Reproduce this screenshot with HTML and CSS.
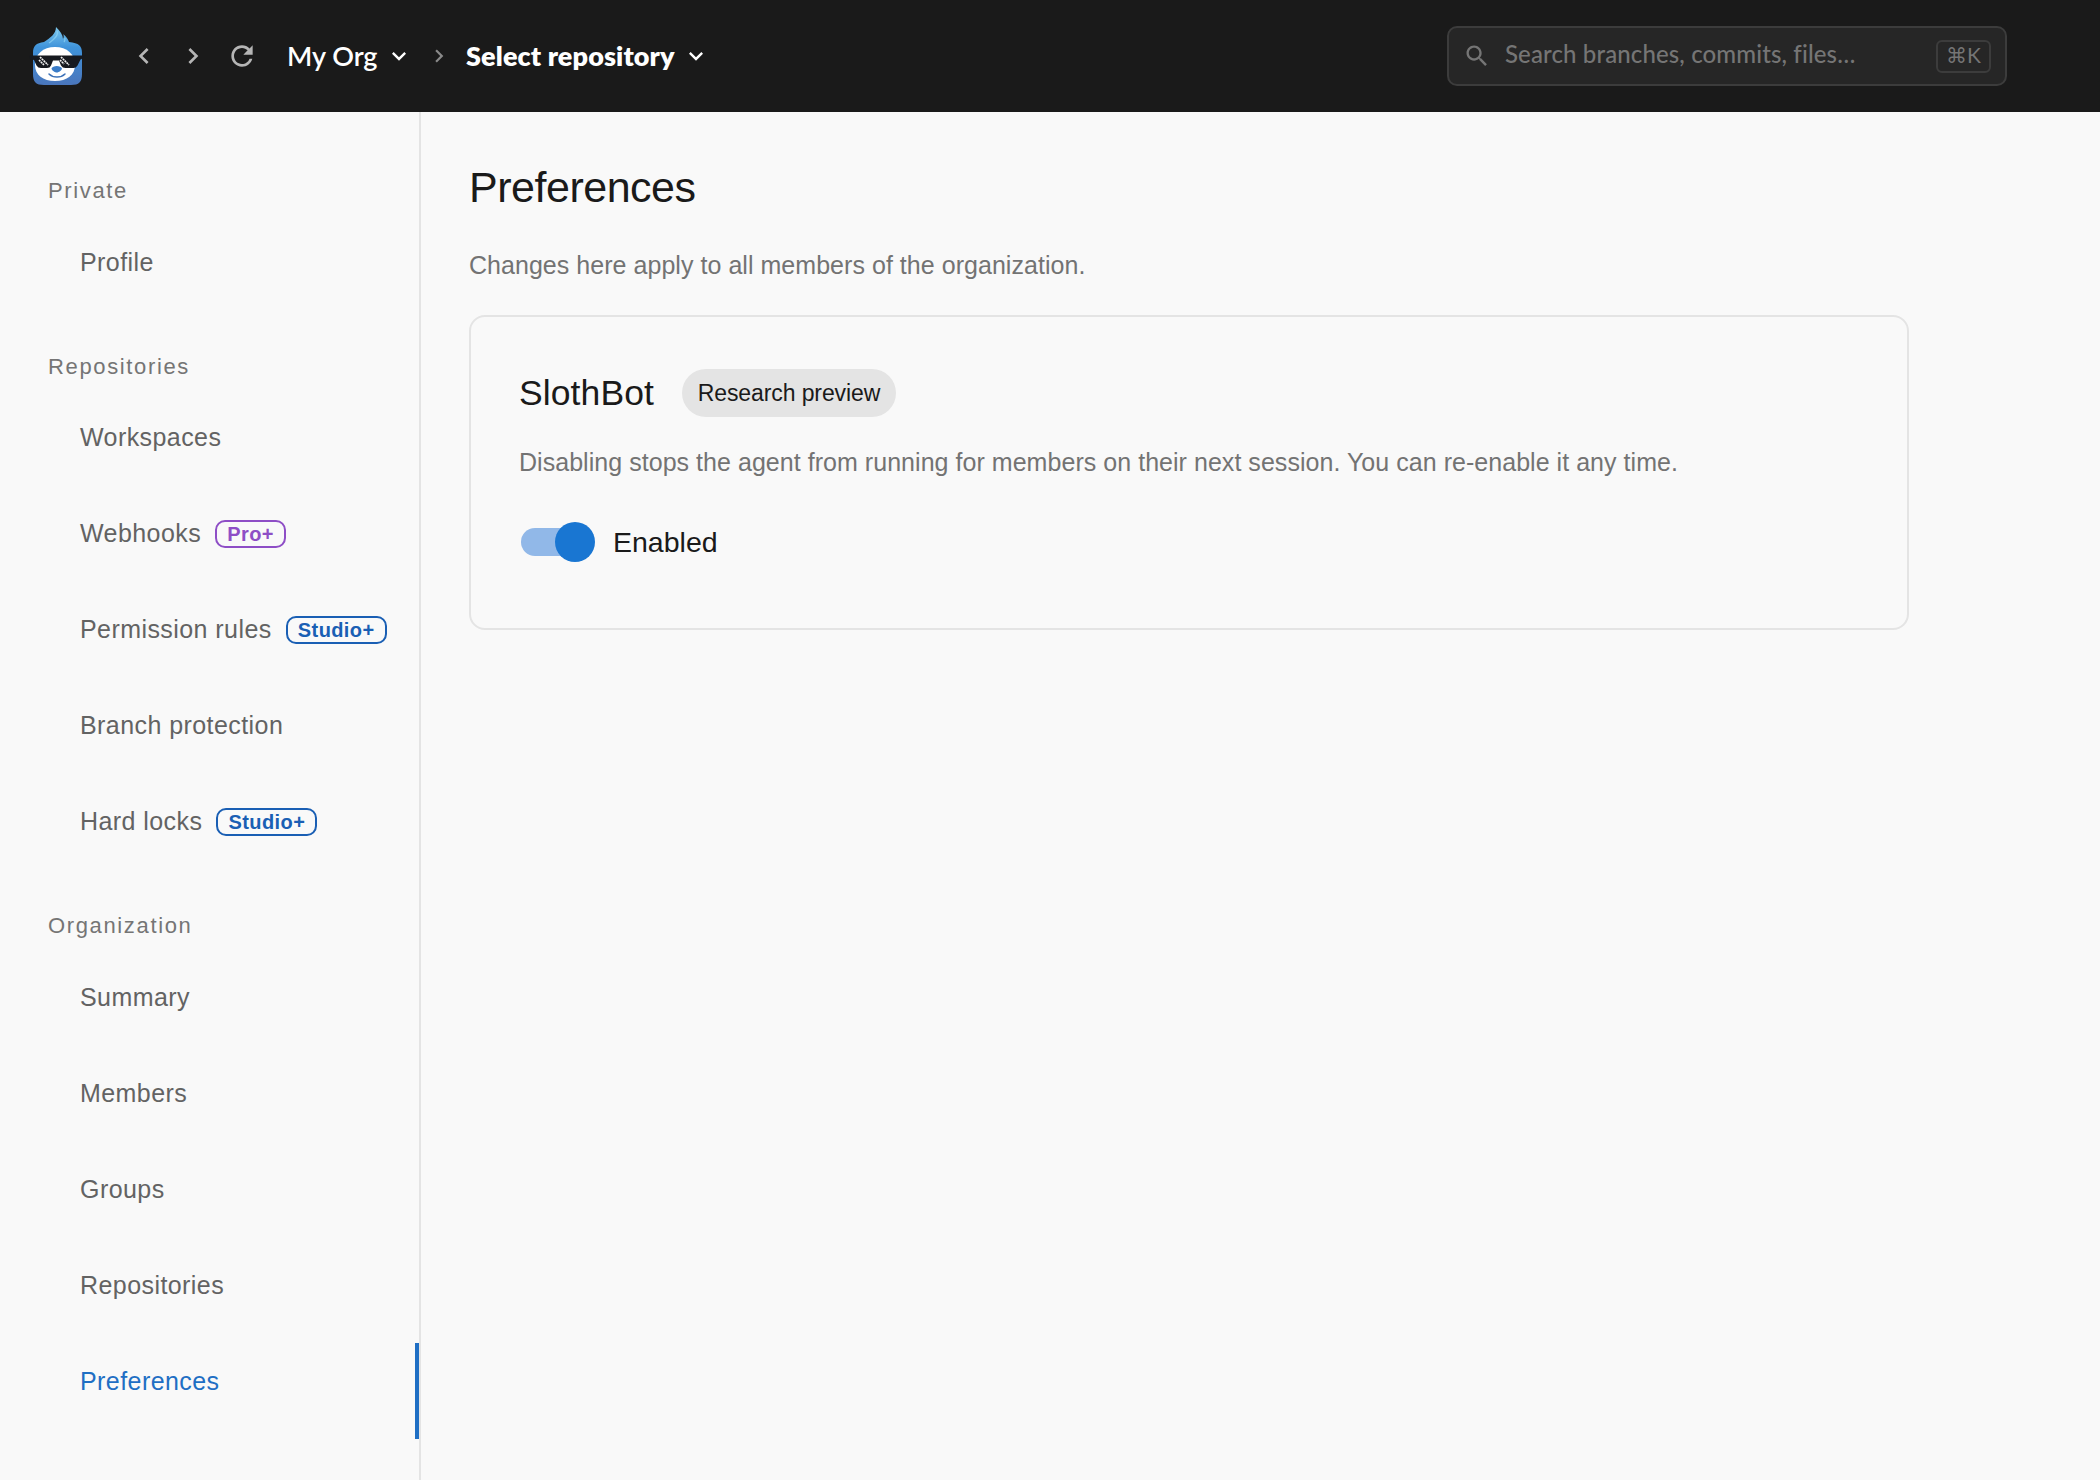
FILE: index.html
```html
<!DOCTYPE html>
<html lang="en">
<head>
<meta charset="utf-8">
<title>Preferences</title>
<link rel="stylesheet" href="styles.css">
</head>
<body>
<header class="topbar">
  <svg class="logo" viewBox="0 0 60 62" aria-label="Home">
    <defs>
      <linearGradient id="fur" x1="0" y1="0" x2="0" y2="1">
        <stop offset="0" stop-color="#7cc8ee"/>
        <stop offset=".35" stop-color="#3f93da"/>
        <stop offset="1" stop-color="#4a76bc"/>
      </linearGradient>
    </defs>
    <path fill="url(#fur)" d="M5 28c0-7 3-10 11-11 6-4 12-8 12-15 4 4 7 8 7 12 1-2 1-4 0-5 3 2 5 5 6 8 10 1 13 4 13 11v21c0 8-3 11-11 11H16C8 60 5 57 5 49z"/>
    <path fill="none" stroke="#9adcf6" stroke-width="1.200" opacity=".6" d="M29 6c2 5-4 9-8 12M37 13c0 2 0 3-1 4"/>
    <path fill="#fff" d="M7 40c0-11 8-18 20-18s20 7 20 18c0 10-8 16-20 16S7 50 7 40z"/>
    <path fill="#16191f" d="M1.500 30.500h56l-3 3-2 1-3 6q-1.500 2.500-4 2.500h-8q-3 0-4.500-2.500L31 35.500h-6l-2 5Q22 43 19 43h-6q-3 0-4.500-2.500L6 35l-4-1z"/>
    <path fill="none" stroke="#f0f0f0" stroke-width="1.600" stroke-dasharray="2 .6" d="M12 32l8 8M11 35l5 5M33 32l8 8M32 35l4 4"/>
    <path fill="#3a7cc8" d="M23.500 43.500c1-3.500 9.500-3.500 10.500 0 0 1.500-3 4-5.250 4s-5.250-2.500-5.250-4z"/>
    <path fill="none" stroke="#3d72b8" stroke-width="1.500" stroke-linecap="round" d="M21 49c4 4 12 4 16 0"/>
  </svg>
  <nav class="history">
    <svg class="icon-32" viewBox="0 0 24 24"><path d="M15.410 7.410 14 6l-6 6 6 6 1.410-1.410L10.830 12z"/></svg>
    <svg class="icon-32" viewBox="0 0 24 24"><path d="M10 6 8.590 7.410 13.170 12l-4.580 4.590L10 18l6-6z"/></svg>
    <svg class="icon-32" viewBox="0 0 24 24"><path d="M17.650 6.350C16.200 4.900 14.210 4 12 4c-4.420 0-7.990 3.580-7.990 8s3.570 8 7.990 8c3.730 0 6.840-2.550 7.730-6h-2.080c-.82 2.330-3.040 4-5.650 4-3.310 0-6-2.690-6-6s2.690-6 6-6c1.660 0 3.140.69 4.220 1.780L13 11h7V4z"/></svg>
  </nav>
  <nav class="crumbs">
    <span class="crumb org">My Org</span>
    <svg class="icon-28" viewBox="0 0 24 24"><path d="M7.410 8.590 12 13.170l4.590-4.580L18 10l-6 6-6-6z"/></svg>
    <svg class="divider" viewBox="0 0 24 24"><path d="M10 6 8.590 7.410 13.170 12l-4.580 4.590L10 18l6-6z"/></svg>
    <span class="crumb repo">Select repository</span>
    <svg class="icon-28" viewBox="0 0 24 24"><path d="M7.410 8.590 12 13.170l4.590-4.580L18 10l-6 6-6-6z"/></svg>
  </nav>
  <div class="search">
    <svg class="icon-28" viewBox="0 0 24 24"><path d="M15.500 14h-.79l-.28-.27C15.410 12.590 16 11.110 16 9.500 16 5.910 13.090 3 9.500 3S3 5.910 3 9.500 5.910 16 9.500 16c1.610 0 3.090-.59 4.230-1.570l.27.28v.79l5 4.990L20.490 19zm-6 0C7.010 14 5 11.990 5 9.500S7.010 5 9.500 5 14 7.010 14 9.500 11.990 14 9.500 14"/></svg>
    <span class="search-text">Search branches, commits, files…</span>
    <kbd class="shortcut">⌘K</kbd>
  </div>
</header>
<div class="body">
  <aside class="sidebar">
    <h2 class="group">Private</h2>
    <a class="item">Profile</a>
    <h2 class="group">Repositories</h2>
    <a class="item">Workspaces</a>
    <a class="item">Webhooks<span class="badge pro">Pro+</span></a>
    <a class="item">Permission rules<span class="badge studio">Studio+</span></a>
    <a class="item">Branch protection</a>
    <a class="item">Hard locks<span class="badge studio">Studio+</span></a>
    <h2 class="group">Organization</h2>
    <a class="item">Summary</a>
    <a class="item">Members</a>
    <a class="item">Groups</a>
    <a class="item">Repositories</a>
    <a class="item active">Preferences</a>
  </aside>
  <main class="content">
    <h1 class="title">Preferences</h1>
    <p class="subtitle">Changes here apply to all members of the organization.</p>
    <section class="card">
      <div class="card-head">
        <h2 class="card-title">SlothBot</h2>
        <span class="chip">Research preview</span>
      </div>
      <p class="card-text">Disabling stops the agent from running for members on their next session. You can re-enable it any time.</p>
      <div class="toggle-row">
        <span class="switch"><span class="thumb"></span></span>
        <span class="toggle-label">Enabled</span>
      </div>
    </section>
  </main>
</div>
</body>
</html>
```
FILE: styles.css
```css
* { box-sizing: border-box; margin: 0; padding: 0; }

body {
  display: flex;
  flex-direction: column;
  height: 1480px;
  overflow: hidden;
  background: #f9f9f9;
  color: #1a1a1a;
  font-family: "Liberation Sans", Arial, sans-serif;
}

svg { display: block; flex: none; fill: currentColor; }

/* Top bar */
.topbar {
  display: flex;
  align-items: center;
  flex: none;
  height: 112px;
  padding: 0 93px 0 28px;
  background: #1a1a1a;
  color: #fff;
  font-family: Lato, sans-serif;
}
.logo { width: 60px; height: 62px; }
.icon-32 { width: 32px; height: 32px; }
.icon-28 { width: 28px; height: 28px; }
.history { display: flex; gap: 17px; margin-left: 40px; color: #b5b5b5; }
.crumbs { display: flex; align-items: center; }
.crumb { font-size: 27px; line-height: 40px; white-space: nowrap; }
.org { width: 98px; margin-left: 29px; font-weight: 600; }
.divider { width: 26px; height: 26px; margin: 0 14px 0 13px; color: #8a8a8a; }
.repo { width: 216px; font-weight: 800; letter-spacing: .12px; }

.search {
  display: flex;
  align-items: center;
  width: 560px;
  height: 60px;
  margin-left: auto;
  padding: 0 14px;
  border: 2px solid #3c3c3c;
  border-radius: 10px;
  background: #262626;
  color: #757575;
}
.search-text {
  flex: 1;
  margin-left: 14px;
  padding-bottom: 4px;
  font-size: 24px;
  font-weight: 500;
  line-height: 36px;
  letter-spacing: .12px;
  white-space: nowrap;
}
.shortcut {
  width: 55px;
  height: 33px;
  border: 2px solid #3c3c3c;
  border-radius: 6px;
  font: 21px/25px Lato, "DejaVu Sans", sans-serif;
  text-align: center;
}

/* Settings navigation */
.body { display: flex; flex: 1; min-height: 0; }
.sidebar {
  flex: none;
  width: 421px;
  padding-top: 32px;
  border-right: 2px solid #e4e4e4;
}
.group {
  height: 79.500px;
  padding: 31px 0 0 48px;
  color: #757575;
  font-size: 22px;
  font-weight: 400;
  line-height: 32px;
  letter-spacing: 1.640px;
}
.item {
  display: flex;
  align-items: flex-start;
  height: 96px;
  padding: 18px 0 0 80px;
  color: #636363;
  font-size: 25px;
  line-height: 40px;
  letter-spacing: .43px;
  white-space: nowrap;
}
.item.active { border-right: 4px solid #1f6fc4; color: #1f6fc4; }
.badge {
  height: 28px;
  margin: 7px 0 0 14px;
  border: 2px solid currentColor;
  border-radius: 10px;
  font-size: 20px;
  font-weight: 700;
  line-height: 25px;
  letter-spacing: .4px;
  text-align: center;
}
.pro { width: 71px; color: #8e4ec6; }
.studio { width: 101px; color: #1a5fb4; }

/* Page content */
.content { width: 1488px; padding: 50px 0 0 48px; }
.title {
  font-size: 43px;
  font-weight: 400;
  line-height: 50px;
  letter-spacing: -.48px;
}
.subtitle, .card-text {
  color: #737373;
  font-size: 25px;
  line-height: 38px;
  letter-spacing: .04px;
  white-space: nowrap;
}
.subtitle { margin-top: 34px; }
.card {
  width: 1440px;
  height: 315px;
  margin-top: 31px;
  padding: 52px 48px 0;
  border: 2px solid #e4e4e4;
  border-radius: 16px;
}
.card-head { display: flex; align-items: center; height: 48px; }
.card-title { width: 163px; font-size: 35.500px; font-weight: 400; letter-spacing: .1px; }
.chip {
  width: 214px;
  height: 48px;
  border-radius: 24px;
  background: #e4e4e4;
  font-size: 23px;
  line-height: 49px;
  letter-spacing: -.1px;
  text-align: center;
}
.card-text { margin-top: 26px; }
.toggle-row { display: flex; align-items: center; height: 40px; margin-top: 41px; }
.switch {
  display: flex;
  align-items: center;
  width: 68px;
  height: 28px;
  margin-left: 2px;
  border-radius: 14px;
  background: #91b8e8;
}
.thumb {
  flex: none;
  width: 40px;
  height: 40px;
  margin-left: 34px;
  border-radius: 50%;
  background: #1976d2;
}
.toggle-label { margin-left: 24px; font-size: 28.500px; }
```
